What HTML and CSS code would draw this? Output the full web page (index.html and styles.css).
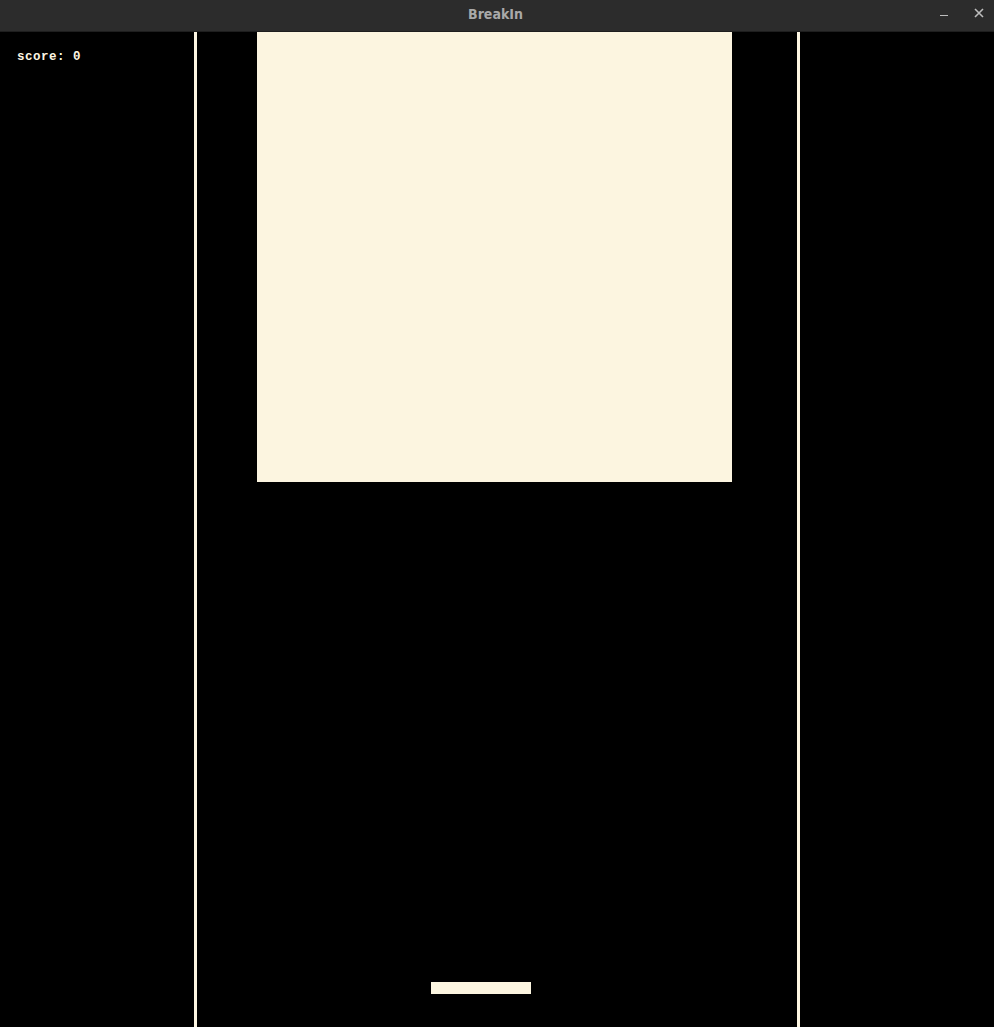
FILE: index.html
```html
<!DOCTYPE html>
<html>
<head>
<meta charset="utf-8">
<link rel="stylesheet" href="styles.css">
</head>
<body>
<div class="titlebar">
  <span class="title">BreakIn</span>
  <div class="controls">
    <span class="ctl minimize"></span>
    <svg class="ctl close" width="10" height="10" viewBox="0 0 10 10"><path d="M1 1L9 9M9 1L1 9" stroke="#bdbdbd" stroke-width="1.6"/></svg>
  </div>
</div>
<div class="game">
  <div class="side left">
    <div class="score">score: 0</div>
  </div>
  <div class="wall"></div>
  <div class="field">
    <div class="bricks"></div>
    <div class="spacer"></div>
    <div class="paddle-row"><div class="paddle"></div></div>
  </div>
  <div class="wall"></div>
  <div class="side right"></div>
</div>
</body>
</html>
```
FILE: styles.css
```css
html, body {
  margin: 0;
  padding: 0;
  background: #000;
  width: 994px;
  height: 1027px;
  overflow: hidden;
}
.titlebar {
  height: 31px;
  background: #2c2c2c;
  border-bottom: 1px solid #1e1e1e;
  position: relative;
  display: flex;
  align-items: center;
  justify-content: center;
}
.title {
  font-family: "DejaVu Sans Condensed", "DejaVu Sans", sans-serif;
  font-weight: bold;
  font-size: 14px;
  color: #a9a9a9;
  margin-left: -3px;
  margin-top: -3px;
}
.controls {
  position: absolute;
  right: 10px;
  top: 0;
  height: 31px;
  display: flex;
  align-items: center;
  gap: 26px;
}
.minimize {
  display: block;
  width: 8px;
  height: 1px;
  background: #bdbdbd;
  margin-top: -1px;
}
.close {
  display: block;
  margin-top: -5px;
}
.game {
  display: flex;
  height: 995px;
}
.side.left {
  width: 194px;
  position: relative;
}
.score {
  font-family: "Liberation Mono", "DejaVu Sans Mono", monospace;
  font-weight: bold;
  font-size: 12.5px;
  color: #fdf6e3;
  padding: 18px 0 0 17px;
  line-height: 14px;
  letter-spacing: 0.5px;
}
.wall {
  width: 3px;
  background: #fdf6e3;
}
.field {
  width: 600px;
  display: flex;
  flex-direction: column;
}
.bricks {
  margin-left: 60px;
  width: 475px;
  height: 450px;
  background: #fcf5e0;
}
.spacer {
  height: 500px;
}
.paddle-row {
  padding-left: 234px;
}
.paddle {
  width: 100px;
  height: 12px;
  background: #fcf5e0;
}
.side.right {
  flex: 1;
}
```
